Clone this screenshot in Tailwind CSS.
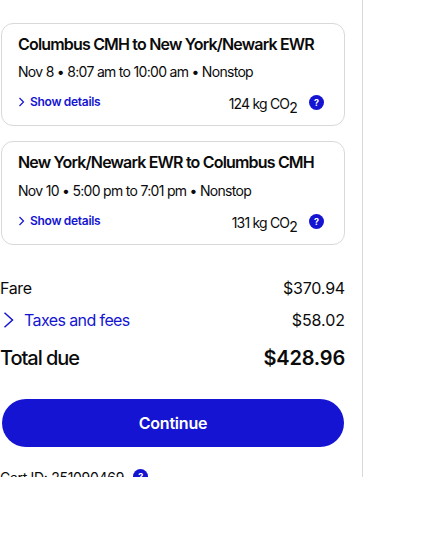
<!DOCTYPE html>
<html lang="en">
<head>
<meta charset="UTF-8">
<meta name="viewport" content="width=device-width, initial-scale=1.0">
<title>Trip summary</title>
<script src="https://cdn.jsdelivr.net/npm/@tailwindcss/browser@4"></script>
</head>
<body class="bg-white font-['Inter',sans-serif] text-[#0b0b0b]">
    <!-- Summary column -->
    <div class="w-[363px] h-[477px] border-r border-[#d9d9d9] overflow-hidden pt-[23px]">
        <div class="w-[345px] flex flex-col">
            <!-- Outbound -->
            <div class="ml-px w-[344px] h-[103px] border border-[#d9d9d9] rounded-[12px] pl-4 pr-[20px] pt-[10px]">
                <h3 class="text-[16px] leading-[20px] font-semibold tracking-[-0.82px] whitespace-nowrap">Columbus CMH to New York/Newark EWR</h3>
                <p class="mt-[8px] text-[14px] leading-[20px] tracking-[-0.7px] whitespace-nowrap">Nov 8 • 8:07 am to 10:00 am • Nonstop</p>
                <div class="mt-[8px] flex items-center justify-between">
                    <a class="flex items-center gap-[5px] text-[12px] leading-[20px] font-semibold text-[#1414d2] tracking-[-0.3px]">
                        <svg class="w-[7px] h-[10px]" viewBox="0 0 7 10" fill="none" stroke="currentColor" stroke-width="1.2"><path d="M1.5 1l4 4-4 4"/></svg>
                        Show details
                    </a>
                    <div class="flex items-start gap-[12px]">
                        <span class="text-[14px] leading-[20px] tracking-[-0.8px] mt-[4px] whitespace-nowrap">124 kg CO<sub class="text-[14px] leading-[0]">2</sub></span>
                        <span class="mt-[5px] w-[15px] h-[15px] rounded-full bg-[#1414d2] text-white text-[9px] leading-[15px] font-bold text-center">?</span>
                    </div>
                </div>
            </div>
            <!-- Return -->
            <div class="ml-px mt-[15px] w-[344px] h-[104px] border border-[#d9d9d9] rounded-[12px] pl-4 pr-[20px] pt-[10px]">
                <h3 class="text-[16px] leading-[20px] font-semibold tracking-[-0.82px] whitespace-nowrap">New York/Newark EWR to Columbus CMH</h3>
                <p class="mt-[9px] text-[14px] leading-[20px] tracking-[-0.7px] whitespace-nowrap">Nov 10 • 5:00 pm to 7:01 pm • Nonstop</p>
                <div class="mt-[8px] flex items-center justify-between">
                    <a class="flex items-center gap-[5px] text-[12px] leading-[20px] font-semibold text-[#1414d2] tracking-[-0.3px]">
                        <svg class="w-[7px] h-[10px]" viewBox="0 0 7 10" fill="none" stroke="currentColor" stroke-width="1.2"><path d="M1.5 1l4 4-4 4"/></svg>
                        Show details
                    </a>
                    <div class="flex items-start gap-[12px]">
                        <span class="text-[14px] leading-[20px] tracking-[-0.8px] mt-[4px] whitespace-nowrap">131 kg CO<sub class="text-[14px] leading-[0]">2</sub></span>
                        <span class="mt-[5px] w-[15px] h-[15px] rounded-full bg-[#1414d2] text-white text-[9px] leading-[15px] font-bold text-center">?</span>
                    </div>
                </div>
            </div>
            <!-- Prices -->
            <div class="mt-[33px] flex justify-between text-[16px] leading-[20px] tracking-[-0.35px]">
                <span>Fare</span><span class="tracking-[-0.2px]">$370.94</span>
            </div>
            <div class="mt-[12px] flex justify-between text-[16px] leading-[20px] tracking-[-0.6px]">
                <a class="flex items-center gap-[10px] text-[#1414d2] pl-[3px]">
                    <svg class="w-[11px] h-[16px]" viewBox="0 0 11 16" fill="none" stroke="currentColor" stroke-width="1.5"><path d="M1.5 .7l8 7.3-8 7.3"/></svg>
                    Taxes and fees
                </a>
                <span class="tracking-[-0.05px]">$58.02</span>
            </div>
            <div class="mt-[15px] flex justify-between text-[20px] leading-[26px] font-medium tracking-[-1.05px]">
                <span>Total due</span><span class="font-semibold tracking-[-0.2px]">$428.96</span>
            </div>
            <button class="mt-[28px] ml-[2px] w-[342px] h-[48px] rounded-full bg-[#1414d2] text-white text-[16px] font-semibold tracking-[-0.2px]">Continue</button>
            <div class="mt-[21px] flex items-start gap-[9px] text-[14px] leading-[20px] tracking-[-0.3px]">
                <span>Cart ID: 251090469</span>
                <span class="mt-[1px] w-[15px] h-[15px] rounded-full bg-[#1414d2] text-white text-[9px] leading-[15px] font-bold text-center">?</span>
            </div>
        </div>
    </div>
</body>
</html>
